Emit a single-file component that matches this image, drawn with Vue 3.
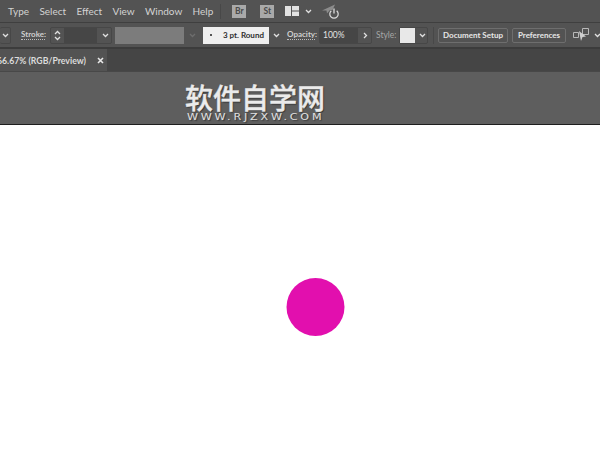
<template>
  <div class="app">
    <div class="menubar">
      <span v-for="m in menus" :key="m" class="menu">{{ m }}</span>
      <i class="sep"></i>
      <span class="badge br">Br</span>
      <span class="badge st">St</span>
      <svg class="layout" width="14" height="10" viewBox="0 0 14 10">
        <path d="M0 0h6v10H0zM7 0h7v4.500H7zM7 5.500h7V10H7z" fill="#e2e2e2" />
      </svg>
      <svg class="chev menu-chev" width="7" height="5" viewBox="0 0 7 5">
        <path d="M1 1l2.500 2.500L6 1" />
      </svg>
      <svg class="gpu" width="21" height="18" viewBox="0 0 21 18">
        <path d="M0 8.500L13 2.500 10.500 8 8 8 5 11.500 4.500 8.500z" fill="#8c8c8c" />
        <path d="M9.300 8.800a4.200 4.200 0 1 0 5.400 0" fill="none" stroke="#dcdcdc" stroke-width="1.200" />
        <path d="M12 6.500v5" stroke="#dcdcdc" stroke-width="1.300" />
      </svg>
    </div>

    <div class="controlbar">
      <span class="field stub">
        <svg class="chev" width="7" height="5" viewBox="0 0 7 5"><path d="M1 1l2.500 2.500L6 1" /></svg>
      </span>
      <span class="label link stroke-label">Stroke:</span>
      <span class="field stroke-field">
        <span class="stepper">
          <svg width="7" height="5" viewBox="0 0 7 5"><path d="M1 4l2.500-2.500L6 4" /></svg>
          <svg width="7" height="5" viewBox="0 0 7 5"><path d="M1 1l2.500 2.500L6 1" /></svg>
        </span>
        <span class="stroke-input"></span>
        <svg class="chev" width="7" height="5" viewBox="0 0 7 5"><path d="M1 1l2.500 2.500L6 1" /></svg>
      </span>
      <span class="swatch-wide"></span>
      <svg class="chev dim" width="7" height="5" viewBox="0 0 7 5"><path d="M1 1l2.500 2.500L6 1" /></svg>
      <span class="profile"><b class="dot"></b>3 pt. Round</span>
      <svg class="chev profile-chev" width="7" height="5" viewBox="0 0 7 5"><path d="M1 1l2.500 2.500L6 1" /></svg>
      <span class="label link opacity-label">Opacity:</span>
      <span class="field opacity-field">
        <span class="opacity-input">100%</span>
        <svg class="arrow" width="5" height="7" viewBox="0 0 5 7"><path d="M1 1l2.500 2.500L1 6" /></svg>
      </span>
      <span class="label style-label">Style:</span>
      <span class="field style-field">
        <span class="style-swatch"></span>
        <svg class="chev" width="7" height="5" viewBox="0 0 7 5"><path d="M1 1l2.500 2.500L6 1" /></svg>
      </span>
      <i class="sep short"></i>
      <span class="btn setup">Document Setup</span>
      <span class="btn prefs">Preferences</span>
      <svg class="arrange" width="17" height="14" viewBox="0 0 17 14">
        <path d="M.500 4.500h5v5h-5zM9.500 .500h6v6h-6z" fill="none" stroke="#b8b8b8" />
        <path d="M6 3l7 5.500-3.500 .500L8 13z" fill="#cfcfcf" />
      </svg>
      <svg class="chev arrange-chev" width="7" height="5" viewBox="0 0 7 5"><path d="M1 1l2.500 2.500L6 1" /></svg>
    </div>

    <div class="tabbar">
      <div class="tab">
        <span class="tab-title">66.67% (RGB/Preview)</span>
        <svg class="tab-close" width="7" height="7" viewBox="0 0 7 7">
          <path d="M1 1l5 5M6 1L1 6" stroke="#e8e8e8" stroke-width="1.600" />
        </svg>
      </div>
    </div>

    <div class="canvas-top">
      <div class="watermark">
        <div class="wm-cn">软件自学网</div>
        <div class="wm-en">WWW.RJZXW.COM</div>
      </div>
    </div>

    <div class="artboard">
      <div class="circle"></div>
    </div>
  </div>
</template>

<script setup>
const menus = ["Type", "Select", "Effect", "View", "Window", "Help"];
</script>

<style>
html,
body {
  margin: 0;
  background: #fff;
}
</style>

<style scoped>
.app {
  width: 600px;
  height: 471px;
  overflow: hidden;
  display: flex;
  flex-direction: column;
  font-family: Lato, "Open Sans", sans-serif;
  color: #d6d6d6;
}
.chev path,
.stepper path,
.arrow path {
  fill: none;
  stroke: #e0e0e0;
  stroke-width: 1.300;
}
.chev,
.arrow {
  flex: none;
}

/* top menu */
.menubar {
  height: 23px;
  box-sizing: border-box;
  background: #535353;
  border-bottom: 1px solid #3f3f3f;
  display: flex;
  align-items: center;
  padding-left: 8px;
  font-size: 10px;
}
.menu {
  color: #d2d2d2;
  white-space: nowrap;
  flex: none;
}
.menu + .menu {
  margin-left: 10.300px;
}
.sep {
  width: 1px;
  height: 15px;
  background: #484848;
  margin-left: 7px;
  flex: none;
}
.badge {
  width: 14px;
  height: 13px;
  background: #a9a9a9;
  color: #4a4a4a;
  font-size: 8.500px;
  font-weight: 700;
  line-height: 13px;
  text-align: center;
  flex: none;
}
.br {
  margin-left: 11px;
}
.st {
  margin-left: 14px;
}
.layout {
  margin-left: 11px;
  flex: none;
}
.menu-chev {
  margin-left: 6px;
}
.gpu {
  margin-left: 10px;
  flex: none;
}

/* control bar */
.controlbar {
  height: 26px;
  box-sizing: border-box;
  background: #535353;
  border-bottom: 2px solid #3c3c3c;
  display: flex;
  align-items: center;
  font-size: 8px;
}
.label {
  color: #cfcfcf;
  white-space: nowrap;
  flex: none;
}
.link {
  font-weight: 700;
  border-bottom: 1px dotted #bdbdbd;
  line-height: 9px;
}
.field {
  height: 17px;
  box-sizing: border-box;
  border: 1px solid #474747;
  border-radius: 2px;
  display: flex;
  align-items: center;
  flex: none;
}
.stub {
  width: 11px;
  border-left: 0;
  justify-content: center;
}
.stroke-label {
  margin-left: 10px;
  width: 24px;
}
.stroke-field {
  width: 62px;
  margin-left: 5px;
}
.stepper {
  width: 13px;
  display: flex;
  flex-direction: column;
  align-items: center;
  gap: 1px;
}
.stroke-input {
  width: 33px;
  height: 15px;
  background: #464646;
}
.stroke-field .chev {
  margin-left: 5px;
}
.swatch-wide {
  width: 69px;
  height: 17px;
  background: #7c7c7c;
  margin-left: 3px;
  flex: none;
}
.dim {
  margin-left: 5px;
}
.dim path {
  stroke: #6d6d6d;
}
.profile {
  width: 66px;
  height: 17px;
  background: #efefef;
  color: #2e2e2e;
  margin-left: 7px;
  display: flex;
  align-items: center;
  font-size: 8px;
  font-weight: 700;
  white-space: nowrap;
  flex: none;
}
.dot {
  width: 2px;
  height: 2px;
  border-radius: 50%;
  background: #222;
  margin: 0 11px 0 7px;
  flex: none;
}
.profile-chev {
  margin-left: 4px;
}
.opacity-label {
  margin-left: 7px;
  width: 28px;
}
.opacity-field {
  width: 53px;
  margin-left: 4px;
}
.opacity-input {
  width: 35px;
  height: 15px;
  line-height: 14px;
  background: #464646;
  padding-left: 3px;
  color: #e2e2e2;
  font-size: 8.500px;
  flex: none;
}
.arrow {
  margin-left: 5px;
}
.style-label {
  margin-left: 4px;
  color: #a6a6a6;
  width: 20px;
  font-size: 8.500px;
}
.style-field {
  width: 29px;
  margin-left: 3px;
}
.style-swatch {
  width: 15px;
  height: 15px;
  background: #e8e8e8;
  flex: none;
}
.style-field .chev {
  margin-left: 4px;
}
.short {
  height: 17px;
  margin-left: 5px;
}
.btn {
  height: 15px;
  line-height: 13px;
  box-sizing: border-box;
  border: 1px solid #6e6e6e;
  border-radius: 2px;
  text-align: center;
  color: #e6e6e6;
  font-size: 8px;
  font-weight: 700;
  white-space: nowrap;
  flex: none;
}
.setup {
  width: 70px;
  margin-left: 4px;
}
.prefs {
  width: 54px;
  margin-left: 4px;
}
.arrange {
  margin-left: 7px;
  flex: none;
}
.arrange-chev {
  margin-left: 4px;
}

/* document tabs */
.tabbar {
  height: 22px;
  background: #454545;
  display: flex;
  flex: none;
}
.tab {
  width: 107px;
  background: #535353;
  display: flex;
  align-items: center;
  font-size: 8.700px;
  font-weight: 700;
  color: #dcdcdc;
  white-space: nowrap;
  overflow: hidden;
}
.tab-title {
  margin-left: -3px;
  margin-right: 11px;
  flex: none;
}
.tab-close {
  flex: none;
}

/* canvas */
.canvas-top {
  position: relative;
  height: 54px;
  box-sizing: border-box;
  background: #5e5e5e;
  border-top: 1px solid #484848;
  border-bottom: 1px solid #1e1e1e;
  flex: none;
}
.watermark {
  position: absolute;
  left: 185px;
  top: 12px;
  width: 141px;
}
.wm-cn {
  font-family: "Noto Sans CJK SC", sans-serif;
  font-size: 28px;
  font-weight: 500;
  line-height: 27px;
  color: #ebebeb;
  text-shadow: 1px 1px 1px #333;
  -webkit-text-stroke: 0.4px #ebebeb;
  white-space: nowrap;
}
.wm-en {
  font-family: "DejaVu Sans", sans-serif;
  font-size: 9.500px;
  line-height: 10px;
  margin: 1px 0 0 2px;
  letter-spacing: 2.400px;
  color: #e2e2e2;
  text-shadow: 1px 1px 1px #3a3a3a;
  white-space: nowrap;
  transform: scaleX(1.17);
  transform-origin: left center;
}
.artboard {
  position: relative;
  flex: 1;
  background: #fff;
}
.circle {
  position: absolute;
  left: 287px;
  top: 153px;
  width: 58px;
  height: 58px;
  border-radius: 50%;
  background: #e20fae;
  transform: translateX(-0.5px);
}
</style>
